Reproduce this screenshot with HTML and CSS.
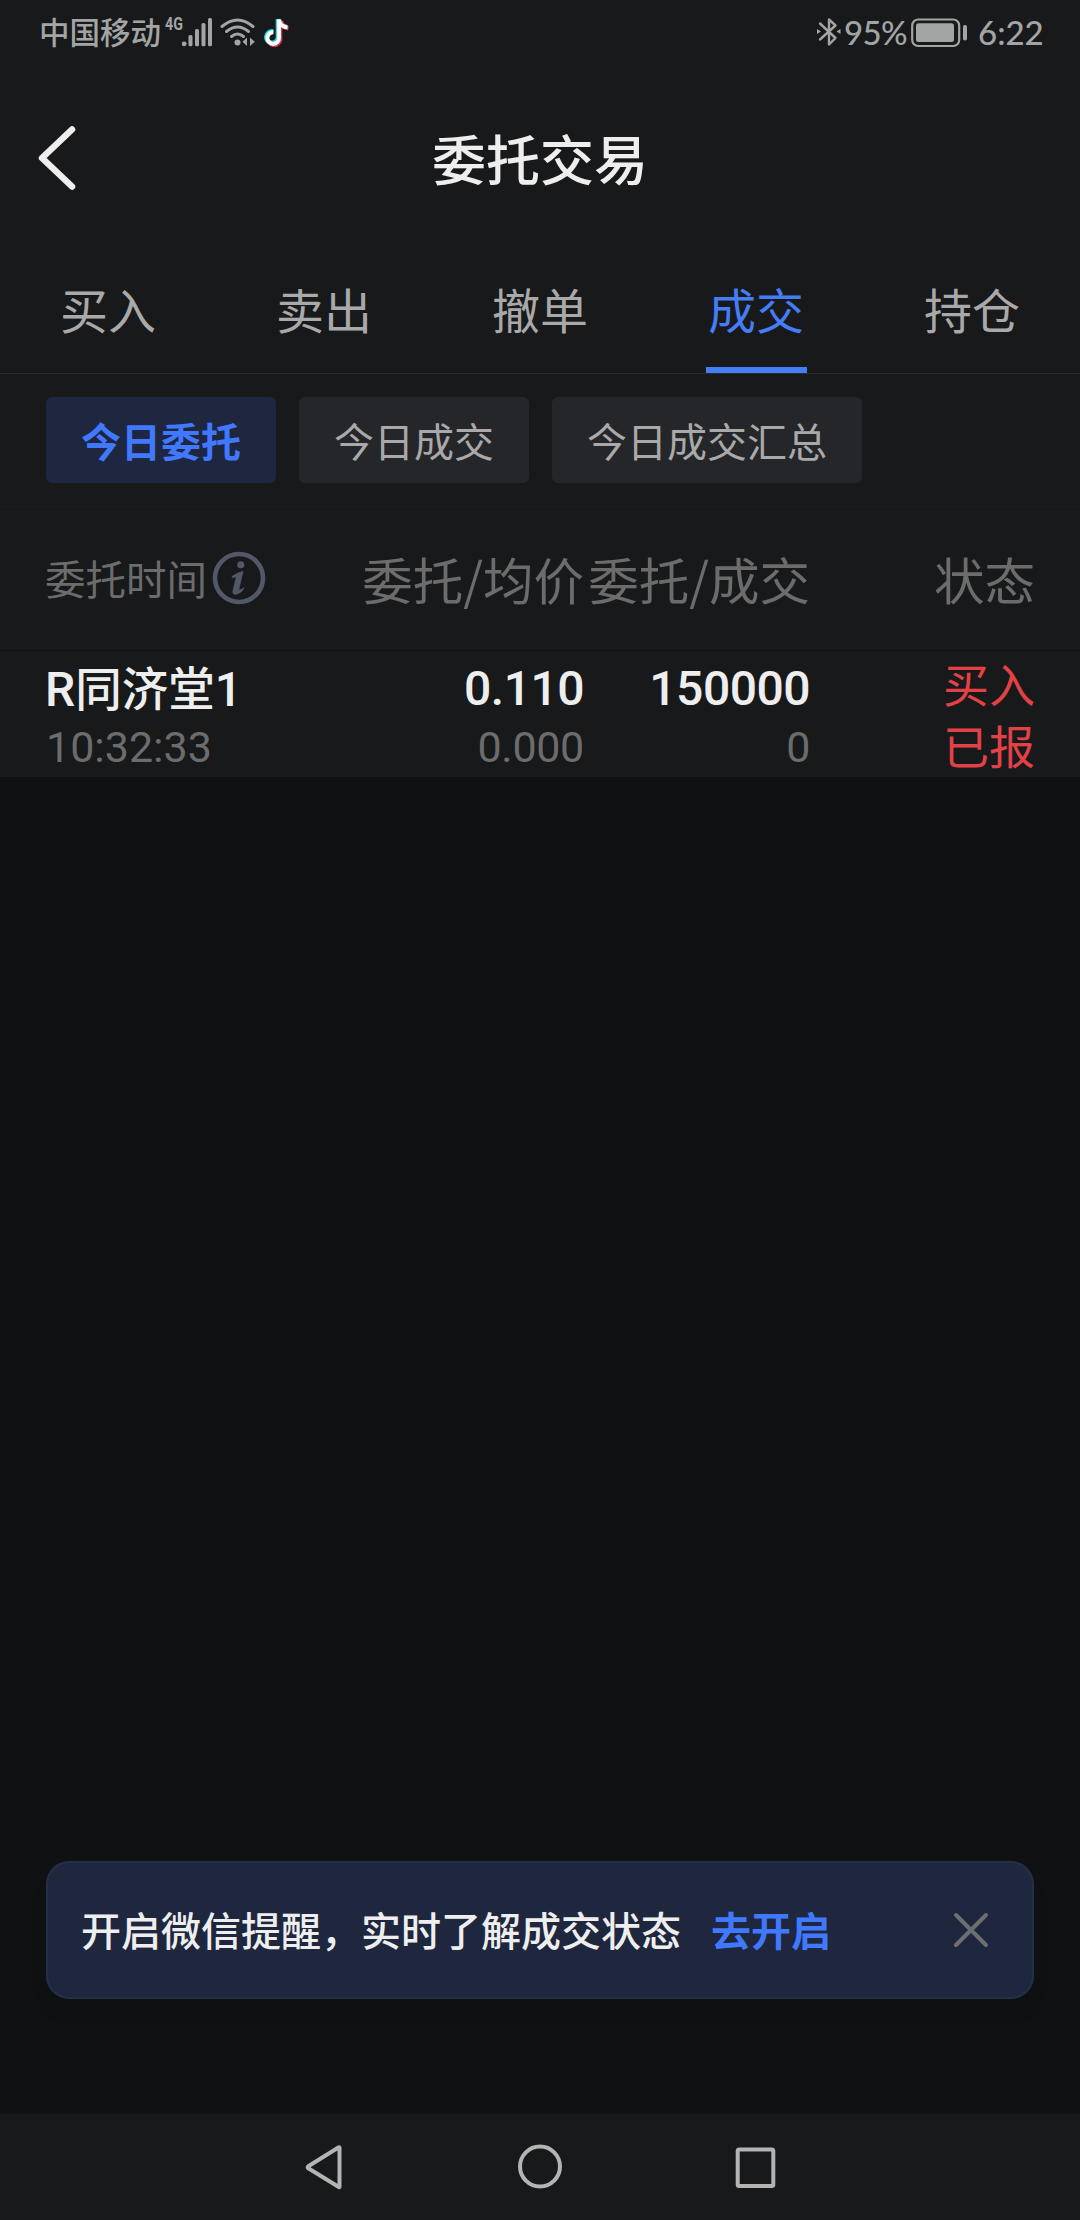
FILE: index.html
```html
<!DOCTYPE html>
<html lang="zh-CN">
<head>
<meta charset="utf-8">
<title>委托交易</title>
<link rel="stylesheet" href="styles.css">
</head>
<body>
<div class="screen">
  <div class="statusbar">
    <div class="status-left">
      <span class="carrier">中国移动</span>
      <span class="net">4G</span>
      <svg class="signal" width="31" height="30" viewBox="0 0 31 30"><g fill="#a3a5a5"><circle cx="2.2" cy="26.8" r="2.4"/><rect x="6.5" y="18" width="4" height="11.3" rx="1.5"/><rect x="13" y="12" width="4" height="17.3" rx="1.5"/><rect x="19.5" y="6" width="4" height="23.3" rx="1.5"/><rect x="26" y="1" width="4" height="28.3" rx="1.5"/></g></svg>
      <svg class="wifi" width="36" height="30" viewBox="0 0 36 30"><g fill="none" stroke="#a3a5a5" stroke-width="3" stroke-linecap="round"><path d="M2 9.5Q17.500 -3.500 33 9.500"/><path d="M6.500 14.500Q17.500 5.500 28.500 14.500"/><path d="M11.500 19.500Q17.500 14.500 23.500 19.500"/></g><circle cx="17.500" cy="25.500" r="3" fill="#a3a5a5"/><path d="M27 20.500v8.500l-4.500-4.200zM30 20.500v8.500l4.800-4.200z" fill="#a3a5a5"/></svg>
      <svg class="note" width="26" height="30" viewBox="0 0 26 30"><g fill="none" stroke-width="4.600"><path stroke="#20e0df" d="M14 2V20.300A5.800 5.800 0 1 1 9 14.300M14 2Q14.800 9 22.500 9.800"/><path stroke="#e5305a" d="M16 3.500V21.800A5.800 5.800 0 0 1 6 26M17 4Q18 10.500 24.500 11.300"/><path stroke="#fff" stroke-width="4" d="M15 2.500V21A5.800 5.800 0 1 1 9.500 15.300M15 2.500Q16 9.500 23.500 10.500"/></g></svg>
    </div>
    <div class="status-right">
      <svg class="bt" width="24" height="32" viewBox="0 0 24 32"><path d="M3 7.500 18.500 22 12 28.500V3.500L18.500 9.500 3 23.500" fill="none" stroke="#a3a5a5" stroke-width="2.400" stroke-linejoin="round" stroke-linecap="round"/><path d="M0 13l4 2.500-4 2.500zM23.500 13l-4 2.500 4 2.500z" fill="#a3a5a5"/></svg>
      <span class="percent">95%</span>
      <svg class="battery" width="57" height="30" viewBox="0 0 57 30"><rect x="1.200" y="1.500" width="47" height="26.500" rx="6" fill="none" stroke="#a3a5a5" stroke-width="2.200"/><rect x="5" y="5.300" width="38" height="18.800" rx="2.500" fill="#a3a5a5"/><rect x="52" y="7" width="4" height="15.500" rx="1.800" fill="#a3a5a5"/></svg>
      <span class="clock">6:22</span>
    </div>
  </div>

  <header class="titlebar">
    <svg class="back" width="42" height="68" viewBox="0 0 42 68"><path d="M36 4.500 6 33 36 61.500" fill="none" stroke="#eee" stroke-width="6.500" stroke-linecap="round" stroke-linejoin="round"/></svg>
    <h1 class="title">委托交易</h1>
  </header>

  <nav class="tabs">
    <div class="tab"><span>买入</span></div>
    <div class="tab"><span>卖出</span></div>
    <div class="tab"><span>撤单</span></div>
    <div class="tab tab-active"><span>成交</span></div>
    <div class="tab"><span>持仓</span></div>
  </nav>

  <div class="chips">
    <div class="chip chip-active">今日委托</div>
    <div class="chip">今日成交</div>
    <div class="chip">今日成交汇总</div>
  </div>

  <div class="grid table-head">
    <div class="time-head"><span>委托时间</span>
      <svg width="54" height="54" viewBox="0 0 54 54"><circle cx="27" cy="27" r="24" fill="none" stroke="#525868" stroke-width="4.600"/><circle cx="28.800" cy="13.800" r="3.500" fill="#525868"/><path d="M20 25.500Q25.500 21.500 31 20.500L27 37.500Q26.500 39.700 28 39Q30 38 32 36.800Q30 42 24 43.300Q20 43.300 21 39.500L24 27.500Q24.300 25.700 23 25.800L20.500 26.800Z" fill="#525868" stroke="#525868" stroke-width=".8"/></svg>
    </div>
    <div class="num">委托/均价</div>
    <div class="num">委托/成交</div>
    <div class="num">状态</div>
  </div>

  <div class="grid order">
    <div class="cell"><div class="name"><span class="lat">R</span>同济堂<span class="lat">1</span></div><div class="sub time">10:32:33</div></div>
    <div class="cell num"><div class="main">0.110</div><div class="sub">0.000</div></div>
    <div class="cell num"><div class="main">150000</div><div class="sub">0</div></div>
    <div class="state num"><div>买入</div><div>已报</div></div>
  </div>

  <main class="empty">
    <div class="banner">
      <span class="banner-text">开启微信提醒，实时了解成交状态</span>
      <span class="banner-link">去开启</span>
      <svg class="close" width="36" height="36" viewBox="0 0 36 36"><path d="M3 3 33 33M33 3 3 33" fill="none" stroke="#6e6e70" stroke-width="4" stroke-linecap="round"/></svg>
    </div>
  </main>

  <footer class="sysnav">
    <svg width="48" height="48" viewBox="0 0 48 48"><path d="M39.500 4.700V43.700Q39.500 44.500 38.800 44L8.300 25.300Q7 24.300 8.300 23.300L38.800 4.300Q39.500 4 39.500 4.700Z" fill="none" stroke="#b4b4b4" stroke-width="4" stroke-linejoin="round"/></svg>
    <svg width="48" height="48" viewBox="0 0 48 48"><circle cx="24" cy="23.500" r="20" fill="none" stroke="#b4b4b4" stroke-width="4"/></svg>
    <svg width="48" height="48" viewBox="0 0 48 48"><rect x="5.700" y="6.500" width="35.600" height="36.500" rx="1.500" fill="none" stroke="#b4b4b4" stroke-width="4"/></svg>
  </footer>
</div>
</body>
</html>
```
FILE: styles.css
```css
* { box-sizing: border-box; }
body {
  margin: 0;
  background: #17191b;
  color: #eee;
  font-family: "Noto Sans CJK SC", sans-serif;
}
svg { display: block; flex: none; }
.screen {
  width: 1080px;
  height: 2220px;
  display: flex;
  flex-direction: column;
  overflow: hidden;
}

.statusbar {
  height: 66px;
  display: flex;
  justify-content: space-between;
  padding: 0 37px 0 39px;
  color: #a3a5a5;
}
.status-left, .status-right { display: flex; align-items: flex-start; }
.carrier { font-size: 30.5px; line-height: 62px; font-weight: 500; }
.net { font: 700 19px/20px "Roboto", sans-serif; margin: 14px 0 0 4px; width: 17px; transform: scaleX(.75); transform-origin: left; }
.signal { margin-top: 17px; }
.wifi { margin: 17px 0 0 7px; }
.note { margin: 17px 0 0 8px; }
.bt { margin-top: 16px; }
.percent, .clock { font-family: "Lato", sans-serif; font-size: 33px; line-height: 65px; font-weight: 500; }
.percent { width: 67px; margin-left: 3px; letter-spacing: -.6px; }
.battery { margin-top: 18px; }
.clock { width: 65px; margin-left: 10px; white-space: nowrap; }

.titlebar {
  height: 186px;
  display: grid;
  grid-template-columns: 150px 1fr 150px;
  align-items: start;
}
.back { margin: 59px 0 0 36px; }
.title { margin: 52px 0 0; font-size: 54px; line-height: 80px; font-weight: 500; text-align: center; }

.tabs {
  height: 122px;
  display: grid;
  grid-template-columns: repeat(5, 1fr);
  justify-items: center;
  border-bottom: 1px solid #292b2d;
  color: #a9a9a9;
  font-size: 48px;
}
.tab { width: 101px; text-align: center; line-height: 112px; height: 121px; }
.tab-active { color: #447df5; border-bottom: 6px solid #447df5; }

.chips {
  height: 133px;
  padding: 23px 46px;
  display: flex;
  gap: 23px;
  border-bottom: 1px solid #1a1c1e;
}
.chip {
  height: 86px;
  padding: 0 35px;
  border-radius: 6px;
  background: #25262a;
  color: #a9a9a9;
  font-size: 40px;
  line-height: 86px;
}
.chip-active { background: #1e273f; color: #4079ff; font-weight: 700; }

.grid {
  display: grid;
  grid-template-columns: 312px 226px 226px 225px;
  padding: 0 45px 0 46px;
}
.num { text-align: right; }
.table-head {
  height: 144px;
  border-bottom: 1px solid #0e1012;
  color: #6c6c6c;
  font-size: 50.5px;
  line-height: 142px;
  white-space: nowrap;
}
.time-head { display: flex; font-size: 40.5px; gap: 5px; margin-left: -1px; }
.time-head svg { margin-top: 44px; }

.order { height: 126px; }
.cell { font-family: "Roboto", "Noto Sans CJK SC", sans-serif; }
.name, .main { height: 70px; font-size: 48px; line-height: 76px; font-weight: 500; }
.main { letter-spacing: -.5px; }
.name { margin-left: -1px; font-family: "Noto Sans CJK SC", sans-serif; font-size: 46.5px; line-height: 69px; }
.lat { font-family: "Roboto", sans-serif; font-size: 48px; line-height: 1; }
.sub { font-size: 43px; line-height: 52px; color: #6c6c6c; letter-spacing: -.3px; }
.time { letter-spacing: 0; }
.state { color: #e24146; font-size: 46px; line-height: 62px; }

.empty {
  flex: 1;
  display: flex;
  flex-direction: column;
  justify-content: flex-end;
  padding: 0 46px 115px;
  background: #0f1113;
}
.banner {
  height: 138px;
  display: flex;
  align-items: center;
  padding: 0 43px 0 33px;
  border: 2px solid #253048;
  border-radius: 23px;
  background: #1e273e;
  box-shadow: 0 14px 20px -6px rgba(0, 0, 0, .15);
  font-size: 40px;
  line-height: 60px;
}
.banner-text, .banner-link { padding-bottom: 3px; }
.banner-text { font-weight: 500; }
.banner-link { margin-left: 30px; color: #4079ff; font-weight: 700; }
.close { margin-left: auto; }

.sysnav {
  height: 106px;
  display: flex;
  justify-content: center;
  gap: 168px;
  padding-top: 29px;
}
```
